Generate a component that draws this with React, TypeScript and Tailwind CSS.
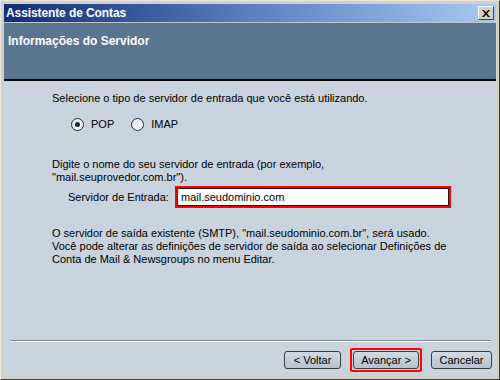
import React from "react";

const font = { fontFamily: '"Liberation Sans", Arial, sans-serif' };

function Radio({ checked, label }: { checked?: boolean; label: string }) {
  return (
    <div className="flex items-center gap-[7px]">
      <div className="w-[13px] h-[13px] rounded-full border border-[#1c2f4a] bg-gradient-to-br from-[#dfe4ea] to-white flex items-center justify-center">
        {checked && <div className="w-[5px] h-[5px] rounded-full bg-[#1f2a36]" />}
      </div>
      <span>{label}</span>
    </div>
  );
}

function WizButton({ children, highlight, w }: { children: React.ReactNode; highlight?: boolean; w: string }) {
  const btn = (
    <div className={`${w} h-[18px] flex items-center justify-center rounded-[3px] border border-[#3b3b3b] bg-gradient-to-b from-[#d2d9e2] to-[#b6c1ce] text-black`}>
      {children}
    </div>
  );
  if (highlight) {
    return <div className="border-2 border-[#ff0000] rounded-[2px] p-[1px] bg-[#c8d3de]">{btn}</div>;
  }
  return btn;
}

export default function App() {
  return (
    <div
      className="w-[500px] h-[380px] bg-[#d4d0c8] border-t border-l border-t-[#e8e6e1] border-l-[#e8e6e1] border-r border-b border-r-[#404040] border-b-[#404040] p-[3px] flex flex-col text-[11px] text-black overflow-hidden"
      style={font}
    >
      {/* title bar */}
      <div className="h-[18px] flex items-center justify-between pl-[2px] pr-[2px] bg-gradient-to-r from-[#122c75] via-[#5b7fbf] to-[#a8caf1]">
        <span className="text-white font-bold text-[12px] tracking-[-0.1px]">Assistente de Contas</span>
        <div className="w-[16px] h-[14px] bg-[#d4d0c8] border border-t-white border-l-white border-r-[#404040] border-b-[#404040] flex items-center justify-center">
          <svg width="8" height="7" viewBox="0 0 8 7">
            <path d="M0 0h2l2 2.5L6 0h2L5 3.5 8 7H6L4 4.5 2 7H0l3-3.5z" fill="#000" />
          </svg>
        </div>
      </div>
      <div className="h-px bg-[#c0c4c8]" />
      {/* header */}
      <div className="h-[58px] bg-[#5a7590] border-b-2 border-black pl-[4px] pt-[9px]">
        <span className="text-white font-bold text-[12px]">Informações do Servidor</span>
      </div>
      {/* body */}
      <div className="flex-1 bg-[#c8d3de] flex flex-col pt-[11px]">
        <div className="pl-[48px] pr-[20px] flex flex-col leading-[13px]">
          <p>Selecione o tipo de servidor de entrada que você está utilizando.</p>
          <div className="flex gap-[17px] pl-[19px] mt-[13px]">
            <Radio checked label="POP" />
            <Radio label="IMAP" />
          </div>
          <p className="mt-[27px]">
            Digite o nome do seu servidor de entrada (por exemplo,
            <br />
            "mail.seuprovedor.com.br").
          </p>
          <div className="flex items-center mt-[2px] pl-[16px]">
            <span className="w-[107px]">Servidor de Entrada:</span>
            <div className="w-[276px] border-2 border-[#ff0000] p-0">
              <div className="h-[18px] border border-[#1a1a1a] bg-white flex items-center pl-[3px]">
                mail.seudominio.com
              </div>
            </div>
          </div>
          <p className="mt-[19px]">
            O servidor de saída existente (SMTP), "mail.seudominio.com.br", será usado.
            <br />
            Você pode alterar as definições de servidor de saída ao selecionar Definições de
            <br />
            Conta de Mail &amp; Newsgroups no menu Editar.
          </p>
        </div>
        <div className="flex-1" />
        <div className="ml-[6px] mr-[5px] h-[2px] border-t border-t-[#7a8794] border-b border-b-white" />
        <div className="flex justify-end items-center gap-[9px] pr-[4px] pt-[6px] pb-[4px]">
          <WizButton w="w-[57px]">&lt; Voltar</WizButton>
          <WizButton w="w-[66px]" highlight>Avançar &gt;</WizButton>
          <WizButton w="w-[61px]">Cancelar</WizButton>
        </div>
      </div>
    </div>
  );
}
